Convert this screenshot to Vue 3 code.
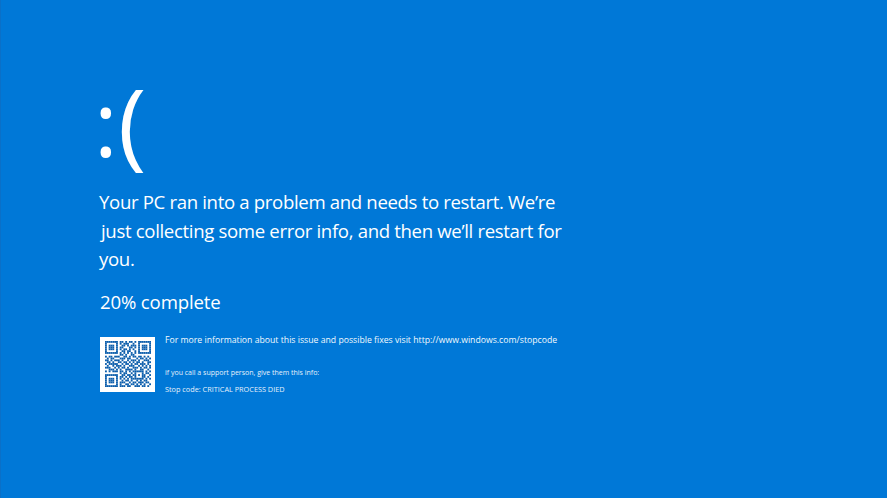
<script setup>
const rows = [
  '1111111011010110101111111',
  '1000001010111001001000001',
  '1011101001101011101011101',
  '1011101011000110101011101',
  '1011101010110101001011101',
  '1000001001101100101000001',
  '1111111010101010101111111',
  '0000000011010011000000000',
  '1011011100110101101101010',
  '0101100011101100010110101',
  '1101011101001011101001110',
  '0110100110110101011010011',
  '1011111001011010110111010',
  '0100101110100111001010101',
  '1110010101101001110101101',
  '0011101010011110100110010',
  '1010111011010101111110101',
  '0000000010110010100010110',
  '1111111001101101101011001',
  '1000001011010110100011010',
  '1011101010101011111110101',
  '1011101001011010010101100',
  '1011101011100101101110110',
  '1000001010011011010101001',
  '1111111011101100111011010'
]
const cells = []
rows.forEach((row, y) => {
  ;[...row].forEach((c, x) => {
    if (c === '1') cells.push({ x, y })
  })
})
</script>

<template>
  <main class="screen">
    <div class="face"><span class="colon">:</span><span class="paren">(</span></div>
    <p class="message">Your PC ran into a problem and needs to restart. We’re<br><span class="nudge">just collecting some error info, and then we’ll restart for</span><br>you.</p>
    <p class="progress">20% complete</p>
    <section class="info">
      <div class="qr">
        <svg class="code-art" viewBox="0 0 25 25" width="46" height="46">
          <rect v-for="c in cells" :key="c.x + '-' + c.y" :x="c.x" :y="c.y" width="1" height="1" fill="#0b5dab" />
        </svg>
      </div>
      <div class="details">
        <p class="more">For more information about this issue and possible fixes visit http://www.windows.com/stopcode</p>
        <p class="small call">if you call a support person, give them this info:</p>
        <p class="small code">Stop code: CRITICAL PROCESS DIED</p>
      </div>
    </section>
  </main>
</template>

<style>
html, body { margin: 0; background: #0078d7; }
</style>

<style scoped>
.screen {
  width: 887px;
  height: 498px;
  box-sizing: border-box;
  padding: 72px 0 0 99px;
  background: #0078d7;
  box-shadow: inset 1px 0 #0a70c8;
  color: #fff;
  font-family: "Open Sans", "Noto Sans", sans-serif;
  overflow: hidden;
}
p { margin: 0; }
.face {
  height: 108px;
  display: flex;
  align-items: flex-start;
  line-height: 108px;
  margin-left: -5px;
}
.colon { font-size: 90px; width: 24px; margin-top: -4px; }
.paren { font-size: 96px; margin-top: -5px; }
.message {
  font-size: 18.6px;
  line-height: 28.5px;
  letter-spacing: -0.34px;
  margin-top: 8px;
}
.nudge { margin-left: 2px; }
.progress {
  font-size: 18.6px;
  line-height: 28px;
  letter-spacing: -0.15px;
  margin-top: 14px;
  margin-left: 1px;
}
.info {
  display: flex;
  margin-top: 21px;
  gap: 10px;
}
.qr {
  width: 55px;
  height: 55px;
  background: #fff;
  display: flex;
  align-items: center;
  justify-content: center;
  margin-left: 1px;
  flex: none;
}
.code-art { filter: blur(0.3px); }
.more { font-size: 8.7px; line-height: 12px; margin-top: -3px; color: #f2f8fd; }
.small { line-height: 10px; color: #e6f1fb; }
.call { font-size: 7px; margin-top: 22px; }
.code { font-size: 7.3px; margin-top: 6px; }
</style>
